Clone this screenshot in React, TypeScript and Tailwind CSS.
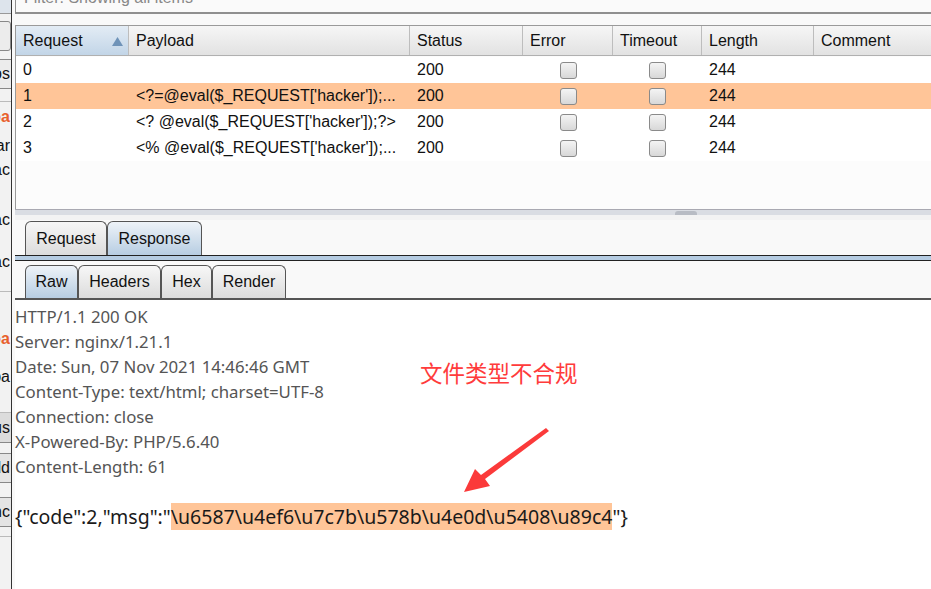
import React from "react";

const cols = [
  { name: "Request", w: 113 },
  { name: "Payload", w: 281 },
  { name: "Status", w: 113 },
  { name: "Error", w: 90 },
  { name: "Timeout", w: 89 },
  { name: "Length", w: 112 },
  { name: "Comment", w: 118 },
];

const rows = [
  { id: "0", payload: "", sel: false },
  { id: "1", payload: "<?=@eval($_REQUEST['hacker']);...", sel: true },
  { id: "2", payload: "<? @eval($_REQUEST['hacker']);?>", sel: false },
  { id: "3", payload: "<% @eval($_REQUEST['hacker']);...", sel: false },
];

function Check() {
  return (
    <div className="w-[17px] h-[17px] rounded-[3px] border border-[#8a8a8a] bg-gradient-to-b from-[#f4f4f4] to-[#d8d8d8]" />
  );
}

function Tab({ label, sel, w }: { label: string; sel?: boolean; w: string }) {
  return (
    <div
      className={
        "h-full flex items-center justify-center rounded-t-[6px] border border-b-0 border-[#555] text-[16px] text-[#111] " +
        w +
        " " +
        (sel
          ? "bg-gradient-to-b from-[#eef3f8] to-[#b7cde2]"
          : "bg-gradient-to-b from-[#f7f7f7] to-[#dcdcdc]")
      }
    >
      {label}
    </div>
  );
}

function Side({ t, h, cls }: { t: string; h: string; cls?: string }) {
  return (
    <div className={"flex items-center justify-end whitespace-nowrap overflow-hidden pr-[1px] " + h + " " + (cls || "")}>
      {t}
    </div>
  );
}

export default function App() {
  return (
    <div
      className="w-[931px] h-[589px] flex bg-[#f9f9f9] overflow-hidden"
      style={{ fontFamily: "'Liberation Sans', Arial, sans-serif" }}
    >
      {/* left strip */}
      <div className="w-[12px] shrink-0 border-r border-[#333] bg-[#f2f2f2] flex flex-col overflow-hidden text-[16px] text-[#111] leading-none">
        <div className="h-[14px] border-b border-[#999] bg-[#dde4ec]" />
        <div className="h-[7px]" />
        <div className="h-[30px] border border-[#888] rounded-[3px] bg-[#ececec] ml-[-6px]" />
        <div className="h-[8px]" />
        <Side t="Pos" h="h-[30px]" cls="border-t border-b border-[#888] bg-[#ececec]" />
        <div className="h-[13px] border-b border-[#bbb]" />
        <Side t="Payloa" h="h-[30px]" cls="text-[#e8602c] font-bold" />
        <Side t="Star" h="h-[28px]" />
        <Side t="Loac" h="h-[20px]" />
        <div className="h-[30px]" />
        <Side t="Loac" h="h-[20px]" />
        <div className="h-[22px]" />
        <Side t="Loac" h="h-[20px]" />
        <div className="h-[20px] border-b border-[#bbb]" />
        <div className="h-[37px]" />
        <Side t="Payloa" h="h-[20px]" cls="text-[#e8602c] font-bold" />
        <div className="h-[18px]" />
        <Side t="Payloa" h="h-[20px]" />
        <div className="h-[26px] border-b border-[#bbb]" />
        <Side t="Pus" h="h-[30px]" cls="bg-[#dcdcdc] border-b border-[#888]" />
        <div className="h-[10px]" />
        <Side t="Add" h="h-[30px]" cls="bg-[#e4e4e4] border-t border-b border-[#888]" />
        <div className="h-[14px]" />
        <Side t="Enc" h="h-[30px]" cls="bg-[#e4e4e4] border-t border-b border-[#888]" />
        <div className="h-[10px] border-b border-[#bbb]" />
      </div>

      {/* main */}
      <div className="flex-1 flex flex-col pl-[3px] min-w-0">
        {/* filter bar */}
        <div className="h-[14px] shrink-0 bg-[#fafafa] border-l border-b-2 border-[#8f8f8f] relative overflow-hidden">
          <div className="absolute left-[8px] top-[-14px] text-[16px] text-[#888]">Filter: Showing all items</div>
        </div>
        <div className="h-[11px] shrink-0" />

        {/* table */}
        <div className="h-[184px] shrink-0 border-l border-t border-[#9a9a9a] bg-[#fcfcfc] flex flex-col">
          <div className="h-[30px] flex border-b border-[#b0b0b0] shrink-0">
            {cols.map((c, i) => (
              <div
                key={c.name}
                style={{ width: c.w }}
                className={
                  "h-full shrink-0 flex items-center px-[7px] text-[16px] text-[#111] border-r border-[#bdbdbd] relative " +
                  (i === 0
                    ? "bg-gradient-to-b from-[#e3ecf5] to-[#c2d5e7]"
                    : "bg-gradient-to-b from-[#f6f6f6] to-[#e2e2e2]")
                }
              >
                {c.name}
                {i === 0 && (
                  <svg className="absolute right-[5px] top-[11px]" width="11" height="9" viewBox="0 0 11 9">
                    <path d="M5.5 0 L11 9 L0 9 Z" fill="#6f93b8" />
                  </svg>
                )}
              </div>
            ))}
          </div>
          <div className="h-[1px]" />
          {rows.map((r) => (
            <div
              key={r.id}
              className={"h-[26px] flex items-center text-[16px] text-[#111] " + (r.sel ? "bg-[#ffc598]" : "bg-white")}
            >
              <div style={{ width: 113 }} className="shrink-0 pl-[7px]">{r.id}</div>
              <div style={{ width: 281 }} className="shrink-0 pl-[7px] whitespace-nowrap overflow-hidden">{r.payload}</div>
              <div style={{ width: 113 }} className="shrink-0 pl-[7px]">200</div>
              <div style={{ width: 90 }} className="shrink-0 flex justify-center"><Check /></div>
              <div style={{ width: 89 }} className="shrink-0 flex justify-center"><Check /></div>
              <div style={{ width: 112 }} className="shrink-0 pl-[7px]">244</div>
              <div className="flex-1" />
            </div>
          ))}
          <div className="flex-1 bg-[#fcfcfc]" />
        </div>

        {/* splitter */}
        <div className="h-[11px] shrink-0 border-t border-[#a9a9b2] bg-[#f3f3f3] relative">
          <div className="h-[5px] bg-[#dadde3]" />
          <div className="absolute left-[660px] top-[1px] w-[22px] h-[4px] rounded-t-[3px] bg-[#b8bcc4]" />
        </div>

        {/* request/response tabs */}
        <div className="h-[35px] shrink-0 flex pl-[10px] pt-[1px]">
          <Tab label="Request" w="w-[82px]" />
          <Tab label="Response" sel w="w-[95px]" />
        </div>
        <div className="h-[1px] bg-[#222] shrink-0" />
        <div className="h-[4px] bg-[#b5cce2] shrink-0" />
        <div className="h-[1px] bg-[#222] shrink-0" />

        {/* raw tabs */}
        <div className="h-[37px] shrink-0 flex pl-[10px] pt-[4px]">
          <Tab label="Raw" sel w="w-[53px]" />
          <Tab label="Headers" w="w-[83px]" />
          <Tab label="Hex" w="w-[51px]" />
          <Tab label="Render" w="w-[74px]" />
        </div>
        <div className="h-[2px] bg-[#555] shrink-0" />

        {/* response body */}
        <div
          className="flex-1 bg-white relative pt-[4px] text-[16.8px] leading-[25px] text-[#555]"
          style={{ fontFamily: "'Noto Sans', 'Open Sans', sans-serif" }}
        >
          <div>HTTP/1.1 200 OK</div>
          <div>Server: nginx/1.21.1</div>
          <div>Date: Sun, 07 Nov 2021 14:46:46 GMT</div>
          <div>Content-Type: text/html; charset=UTF-8</div>
          <div>Connection: close</div>
          <div>X-Powered-By: PHP/5.6.40</div>
          <div>Content-Length: 61</div>
          <div className="h-[25px]" />
          <div className="text-[#1a1a1a] whitespace-nowrap text-[19.5px] leading-[25px]">
            {'{"code":2,"msg":"'}
            <span className="bg-[#ffc598]">{"\\u6587\\u4ef6\\u7c7b\\u578b\\u4e0d\\u5408\\u89c4"}</span>
            {'"}'}
          </div>

          <div
            className="absolute left-[405px] top-[61px] text-[22.5px] text-[#ff3b3b] leading-none"
            style={{ fontFamily: "'Noto Sans CJK SC', sans-serif" }}
          >
            文件类型不合规
          </div>
          <svg className="absolute left-[440px] top-[125px]" width="110" height="70" viewBox="0 0 110 70">
            <path d="M91 3 L94 6 L30 54 L35 61 L9 67 L20 44 L26 50 Z" fill="#fb3a3a" />
          </svg>
        </div>
      </div>
    </div>
  );
}
